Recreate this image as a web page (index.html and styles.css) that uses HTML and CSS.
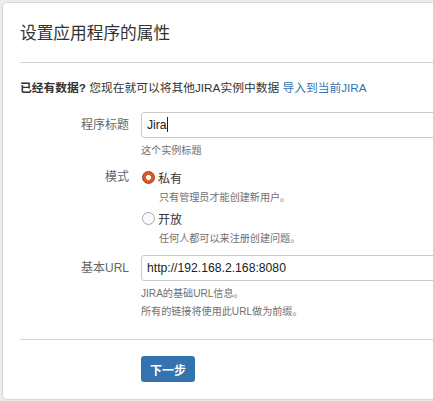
FILE: index.html
```html
<!DOCTYPE html>
<html lang="zh-CN">
<head>
<meta charset="utf-8">
<title>设置应用程序的属性</title>
<link rel="stylesheet" href="styles.css">
</head>
<body>
<div class="card">
  <h1 class="title">设置应用程序的属性</h1>
  <div class="content">
    <p class="intro"><strong>已经有数据?</strong> 您现在就可以将其他JIRA实例中数据 <a href="#" class="link">导入到当前JIRA</a></p>
    <div class="field field-title">
      <div class="lbl">程序标题</div>
      <div class="ctrl">
        <div class="input">Jira<span class="caret"></span></div>
        <div class="hint">这个实例标题</div>
      </div>
    </div>
    <div class="field field-mode">
      <div class="lbl lbl-radio">模式</div>
      <div class="ctrl">
        <div class="radio-row"><span class="radio checked"></span><span class="radio-text">私有</span></div>
        <div class="hint hint-radio">只有管理员才能创建新用户。</div>
        <div class="radio-row radio-row2"><span class="radio"></span><span class="radio-text">开放</span></div>
        <div class="hint hint-radio">任何人都可以来注册创建问题。</div>
      </div>
    </div>
    <div class="field field-url">
      <div class="lbl">基本URL</div>
      <div class="ctrl">
        <div class="input">http://192.168.2.168:8080</div>
        <div class="hint">JIRA的基础URL信息。</div>
        <div class="hint hint-2">所有的链接将使用此URL做为前缀。</div>
      </div>
    </div>
  </div>
  <div class="footer">
    <button class="btn" type="button">下一步</button>
  </div>
</div>
</body>
</html>
```
FILE: styles.css
```css
html, body {
  margin: 0;
  padding: 0;
  overflow: hidden;
  height: 100%;
}
body {
  background: #ececec;
  font-family: "Liberation Sans", "Noto Sans CJK SC", sans-serif;
  color: #333;
  padding: 2px 0 0 2px;
  box-sizing: border-box;
}
.card {
  width: 470px;
  height: 398px;
  box-sizing: border-box;
  background: #fff;
  border: 1px solid #d6d6d6;
  border-radius: 5px;
  padding-left: 17px;
}
.title {
  margin: 0;
  padding: 20px 0 17px;
  font-size: 16.7px;
  line-height: 22px;
  font-weight: normal;
  color: #333;
  border-bottom: 1px solid #d3d3d3;
}
.content {
  padding-top: 17px;
}
.intro {
  margin: 0;
  font-size: 11.75px;
  line-height: 16px;
  color: #333;
}
.intro strong {
  font-weight: bold;
}
.link {
  color: #3572b0;
  text-decoration: none;
}
.field {
  display: flex;
  gap: 12px;
}
.field-title {
  margin-top: 16px;
}
.field-mode {
  margin-top: 10px;
}
.field-url {
  margin-top: 9px;
}
.lbl {
  width: 109px;
  flex: none;
  text-align: right;
  font-size: 12px;
  line-height: 26px;
  color: #666;
}
.lbl-radio {
  line-height: 18px;
}
.ctrl {
  flex: 1;
}
.input {
  height: 26px;
  box-sizing: border-box;
  border: 1px solid #c9c9c9;
  border-radius: 3px;
  padding: 0 5px;
  font-size: 12.2px;
  line-height: 24px;
  color: #222;
  width: 320px;
}
.caret {
  display: inline-block;
  width: 1px;
  height: 15px;
  background: #222;
  vertical-align: -3px;
}
.hint {
  font-size: 10.1px;
  line-height: 14px;
  color: #707070;
  margin-top: 6px;
}
.hint-2 {
  margin-top: 4px;
}
.radio-row {
  display: flex;
  align-items: center;
  height: 18px;
  gap: 3px;
  margin-left: 1px;
}
.radio-row2 {
  margin-top: 4px;
}
.radio {
  width: 13px;
  height: 13px;
  box-sizing: border-box;
  border-radius: 50%;
  border: 1px solid #a9a9a9;
  background: #fafafa;
  flex: none;
}
.radio.checked {
  border: 1px solid #a23c16;
  background: radial-gradient(circle, #fff 0 2.2px, #df5a22 2.8px);
}
.radio-text {
  font-size: 12px;
  color: #333;
}
.hint-radio {
  margin-left: 18px;
  margin-top: 5px;
}
.footer {
  margin-top: 20px;
  border-top: 1px solid #d3d3d3;
  padding: 16px 0 0 121px;
}
.btn {
  display: block;
  width: 54px;
  height: 26px;
  border: none;
  border-radius: 3px;
  background: #3572b0;
  color: #fff;
  font-family: "Noto Sans CJK SC", sans-serif;
  font-weight: bold;
  font-size: 12px;
  padding: 0;
}
```
